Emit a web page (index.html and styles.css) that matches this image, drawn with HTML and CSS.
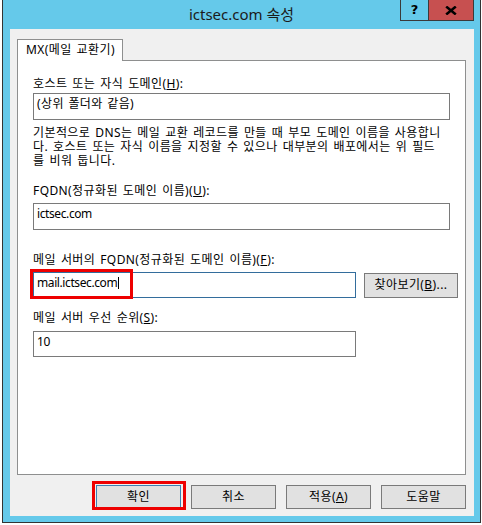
FILE: index.html
```html
<!DOCTYPE html>
<html lang="ko">
<head>
<meta charset="utf-8">
<title>ictsec.com 속성</title>
<link rel="stylesheet" href="styles.css">
</head>
<body>
<div class="window">
  <div class="titlebar">
    <div class="tb-spacer"></div>
    <div class="tb-title">ictsec.com 속성</div>
    <div class="tb-right">
      <div class="tb-btns">
        <div class="tb-help">?</div>
        <div class="tb-close">
          <svg width="12" height="9" viewBox="0 0 12 9"><path d="M1.2 0.6 L10.8 8.4 M10.8 0.6 L1.2 8.4" stroke="#000" stroke-width="2.6" fill="none"/></svg>
        </div>
      </div>
    </div>
  </div>
  <div class="client">
    <div class="tabs">
      <div class="tab">MX(메일 교환기)</div>
    </div>
    <div class="panel">
      <div class="label l1">호스트 또는 자식 도메인(<u>H</u>):</div>
      <div class="field wide f1 ko">(상위 폴더와 같음)</div>
      <div class="desc">
        <div class="line">기본적으로 DNS는 메일 교환 레코드를 만들 때 부모 도메인 이름을 사용합니</div>
        <div class="line">다. 호스트 또는 자식 이름을 지정할 수 있으나 대부분의 배포에서는 위 필드</div>
        <div class="line">를 비워 둡니다.</div>
      </div>
      <div class="label l2">FQDN(정규화된 도메인 이름)(<u>U</u>):</div>
      <div class="field wide f2">ictsec.com</div>
      <div class="label l3">메일 서버의 FQDN(정규화된 도메인 이름)(<u>F</u>):</div>
      <div class="row r3">
        <div class="field narrow focused f3">mail.ictsec.com<span class="caret"></span><span class="mark mark-input"></span></div>
        <div class="btn browse">찾아보기(<u>B</u>)...</div>
      </div>
      <div class="label l4">메일 서버 우선 순위(<u>S</u>):</div>
      <div class="field narrow f4">10</div>
    </div>
    <div class="actions">
      <div class="btn act default">확인<span class="mark mark-ok"></span></div>
      <div class="btn act">취소</div>
      <div class="btn act">적용(<u>A</u>)</div>
      <div class="btn act">도움말</div>
    </div>
  </div>
</div>
</body>
</html>
```
FILE: styles.css
```css
html, body {
  margin: 0;
  padding: 0;
  background: #ffffff;
}
body {
  font-family: "Noto Sans", "Noto Sans CJK KR", sans-serif;
  font-size: 12px;
  color: #000;
  letter-spacing: 0.4px;
  word-spacing: 1.5px;
}
.window {
  box-sizing: border-box;
  margin-left: 2px;
  width: 479px;
  height: 523px;
  border: 1px solid #333;
  border-top: none;
  background: #65c9ea;
  display: flex;
  flex-direction: column;
}
.titlebar {
  height: 29px;
  display: grid;
  grid-template-columns: 1fr auto 1fr;
  align-items: start;
}
.tb-title {
  font-size: 15px;
  line-height: 29px;
  color: #1b1b1b;
  white-space: nowrap;
  letter-spacing: 0;
  word-spacing: 0;
}
.tb-right {
  display: flex;
  justify-content: flex-end;
  padding-right: 6px;
}
.tb-btns {
  display: flex;
  border: 1px solid #3a3a3a;
  border-top: none;
  height: 20px;
}
.tb-help {
  width: 27px;
  border-right: 1px solid #3a3a3a;
  text-align: center;
  font-family: "DejaVu Sans", sans-serif;
  font-weight: bold;
  font-size: 13px;
  line-height: 20px;
  letter-spacing: 0;
}
.tb-close {
  width: 44px;
  background: #c75050;
  display: flex;
  align-items: center;
  justify-content: center;
}
.client {
  flex: 1;
  margin: 0 6px 6px 7px;
  background: #f0f0f0;
  padding: 10px 8px 7px 7px;
  display: flex;
  flex-direction: column;
}
.tabs {
  display: flex;
  height: 22px;
  margin-bottom: -1px;
  position: relative;
  z-index: 1;
}
.tab {
  box-sizing: border-box;
  width: 106px;
  height: 22px;
  background: #fff;
  border: 1px solid #8e8f8f;
  border-bottom: none;
  padding-left: 8px;
  line-height: 20px;
  white-space: nowrap;
}
.panel {
  box-sizing: border-box;
  height: 415px;
  background: #fff;
  border: 1px solid #8e8f8f;
  padding: 15px 0 0 15px;
}
.label {
  line-height: 16px;
  white-space: nowrap;
}
.label u, .btn u { text-decoration: underline; text-underline-offset: 1px; }
.field {
  box-sizing: border-box;
  background: #fff;
  border: 1px solid #7a7a7a;
  padding-left: 3px;
  line-height: 20px;
  white-space: nowrap;
  position: relative;
  letter-spacing: -0.4px;
  word-spacing: 0;
}
.field.ko { letter-spacing: 0.4px; word-spacing: 1px; }
.field.wide { width: 417px; height: 27px; }
.field.narrow { width: 323px; height: 26px; }
.field.focused { border-color: #336d9c; }
.f1 { margin-top: 1px; }
.desc { margin-top: 6px; white-space: nowrap; }
.desc .line { height: 14px; line-height: 14px; }
.l2 { margin-top: 15px; }
.f2 { margin-top: 4px; }
.l3 { margin-top: 22px; }
.row { display: flex; align-items: flex-start; gap: 8px; margin-top: 4px; }
.l4 { margin-top: 12px; }
.f4 { margin-top: 5px; height: 25px; }
.caret {
  display: inline-block;
  width: 1px;
  height: 12px;
  background: #000;
  vertical-align: -2px;
  margin-left: 1px;
}
.btn {
  box-sizing: border-box;
  background: #e1e1e1;
  border: 1px solid #7a7a7a;
  text-align: center;
  white-space: nowrap;
  position: relative;
}
.browse {
  width: 94px;
  height: 25px;
  margin-top: 1px;
  line-height: 22px;
}
.actions {
  display: flex;
  justify-content: flex-end;
  gap: 10px;
  margin-top: 10px;
}
.act {
  width: 85px;
  height: 24px;
  line-height: 21px;
}
.act.default { border-color: #3c7fb1; }
.mark {
  position: absolute;
  box-sizing: border-box;
  border: 3px solid #ee0000;
  pointer-events: none;
}
.mark-ok {
  left: -5px;
  top: -5px;
  right: -6px;
  bottom: -2px;
}
.mark-input {
  left: -4px;
  top: -4px;
  width: 103px;
  height: 30px;
}
```
